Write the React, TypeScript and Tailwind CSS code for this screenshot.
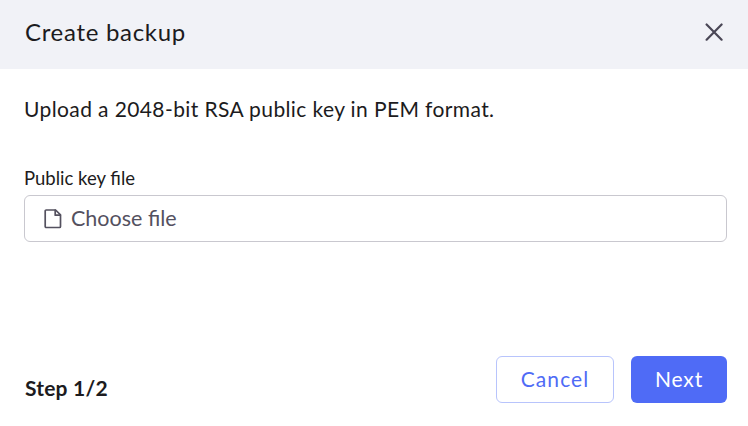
import { useState } from 'react';

interface ButtonProps {
  label: string;
  variant: 'primary' | 'secondary';
  onClick: () => void;
}

function FileIcon() {
  return (
    <svg
      className="w-[18px] h-5 flex-shrink-0"
      viewBox="0 0 18 20"
      fill="none"
      stroke="#54515f"
      strokeWidth="1.7"
      strokeLinecap="round"
      strokeLinejoin="round"
    >
      <path d="M2.2 1H11.6L16.5 5.9V17.5a1 1 0 0 1-1 1H2.2a1 1 0 0 1-1-1V2a1 1 0 0 1 1-1Z" />
      <path d="M11.2 1.2V6.2H16.3" />
    </svg>
  );
}

function CloseIcon() {
  return (
    <svg
      className="w-[18px] h-[18px]"
      viewBox="0 0 18 18"
      fill="none"
      stroke="#4a4756"
      strokeWidth="2.2"
      strokeLinecap="round"
    >
      <path d="M1.6 1.5 16.6 16.7M16.6 1.5 1.6 16.7" />
    </svg>
  );
}

function Button({ label, variant, onClick }: ButtonProps) {
  if (variant === 'primary') {
    return (
      <button
        onClick={onClick}
        className="w-24 h-[47px] pb-0.5 rounded-md bg-[#4f6bf6] text-white text-[21px] tracking-[0.9px]"
      >
        {label}
      </button>
    );
  }

  return (
    <button
      onClick={onClick}
      className="w-[118px] h-[47px] pb-0.5 rounded-md border border-[#b8c4fc] bg-white text-[#4f6bf6] text-[21px] tracking-[1.1px]"
    >
      {label}
    </button>
  );
}

export default function App() {
  const [step, setStep] = useState(1);

  return (
    <div className="flex flex-col h-screen bg-white text-[#1c1b20] font-['Lato','Open_Sans',sans-serif]">
      <header className="flex items-center justify-between h-[69px] pl-[25px] pr-[25px] pb-[6px] bg-[#f1f2f7]">
        <h1 className="text-2xl leading-8 tracking-[0.7px]">Create backup</h1>
        <button title="Close" className="flex">
          <CloseIcon />
        </button>
      </header>

      <main className="flex-1 pl-6 pr-[21px] pt-6">
        <p className="text-[21px] leading-8 tracking-[0.39px]">
          Upload a 2048-bit RSA public key in PEM format.
        </p>
        <div className="mt-[41px] text-[18.5px] leading-6">Public key file</div>
        <button className="mt-[5px] flex items-center gap-[9px] w-full h-[47px] pl-[19px] rounded-md border border-[#c9c8cf] text-[#54515f] text-[21.5px]">
          <FileIcon />
          <span>Choose file</span>
        </button>
      </main>

      <footer className="flex items-end justify-between pl-[25px] pr-[21px] pb-[23px]">
        <span className="text-[21px] leading-[30px] font-bold tracking-[0.2px]">Step {step}/2</span>
        <div className="flex gap-[17px]">
          <Button label="Cancel" variant="secondary" onClick={() => setStep(1)} />
          <Button label="Next" variant="primary" onClick={() => setStep(2)} />
        </div>
      </footer>
    </div>
  );
}
